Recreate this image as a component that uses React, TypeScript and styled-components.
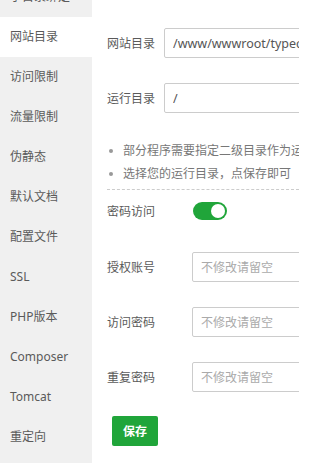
import React, { useState } from 'react';
import styled, { createGlobalStyle } from 'styled-components';

const Global = createGlobalStyle`
  html, body {
    margin: 0;
    padding: 0;
    background: #fff;
  }
  body {
    font-family: "Noto Sans", "Noto Sans CJK SC", sans-serif;
    font-size: 12px;
    color: #5a5a5a;
  }
`;

const Page = styled.div`
  display: flex;
  width: 299px;
  height: 463px;
  overflow: hidden;
`;

const Sidebar = styled.ul`
  width: 92px;
  flex-shrink: 0;
  margin: 0;
  padding: 0;
  list-style: none;
  background: #f0f0f0;
`;

const SideList = styled.div`
  margin-top: -23px;
`;

const SideItem = styled.li<{ active?: boolean }>`
  height: 40px;
  line-height: 40px;
  padding-left: 10px;
  font-size: 12px;
  color: #5a5a5a;
  background: ${({ active }) => (active ? '#fff' : 'transparent')};
  white-space: nowrap;
`;

const Main = styled.div`
  flex: 1;
  min-width: 0;
  overflow: hidden;
  padding: 28px 0 0 15px;
`;

const Row = styled.div<{ gap?: number }>`
  display: flex;
  align-items: center;
  height: 30px;
  margin-bottom: ${({ gap }) => gap ?? 25}px;
`;

const Label = styled.span<{ width: number }>`
  width: ${({ width }) => width}px;
  flex-shrink: 0;
  font-size: 12px;
  color: #5a5a5a;
  white-space: nowrap;
`;

const Input = styled.input`
  flex-shrink: 0;
  box-sizing: border-box;
  width: 260px;
  height: 30px;
  padding: 0 8px;
  border: 1px solid #ccc;
  border-radius: 2px;
  font-family: inherit;
  font-size: 12.5px;
  color: #555;
  outline: none;
  &::placeholder {
    color: #aaa;
    font-size: 12px;
  }
`;

const Tips = styled.ul`
  margin: 26px 0 0;
  padding: 0 0 4px;
  list-style: none;
  border-bottom: 1px dashed #ccc;
`;

const Tip = styled.li`
  position: relative;
  height: 23px;
  line-height: 23px;
  padding-left: 16px;
  color: #777;
  white-space: nowrap;
  &::before {
    content: '';
    position: absolute;
    left: 2px;
    top: 10px;
    width: 4px;
    height: 4px;
    border-radius: 50%;
    background: #999;
  }
`;

const SwitchRow = styled.div`
  display: flex;
  align-items: center;
  height: 30px;
  margin: 6px 0 26px;
`;

const Switch = styled.button<{ on: boolean }>`
  position: relative;
  width: 34px;
  height: 18px;
  padding: 0;
  border: none;
  border-radius: 9px;
  background: ${({ on }) => (on ? '#20a53a' : '#ccc')};
  cursor: pointer;
  &::after {
    content: '';
    position: absolute;
    top: 2px;
    left: ${({ on }) => (on ? '18px' : '2px')};
    width: 14px;
    height: 14px;
    border-radius: 50%;
    background: #fff;
  }
`;

const SaveButton = styled.button`
  margin-left: 5px;
  width: 46px;
  height: 30px;
  border: none;
  border-radius: 2px;
  background: #20a53a;
  color: #fff;
  font-family: inherit;
  font-size: 12px;
  font-weight: bold;
  cursor: pointer;
`;

const menu = [
  '子目录绑定',
  '网站目录',
  '访问限制',
  '流量限制',
  '伪静态',
  '默认文档',
  '配置文件',
  'SSL',
  'PHP版本',
  'Composer',
  'Tomcat',
  '重定向',
];

export default function App(): React.JSX.Element {
  const [locked, setLocked] = useState(true);

  return (
    <>
      <Global />
      <Page>
        <Sidebar>
          <SideList>
            {menu.map((m) => (
              <SideItem key={m} active={m === '网站目录'}>
                {m}
              </SideItem>
            ))}
          </SideList>
        </Sidebar>
        <Main>
          <Row>
            <Label width={57}>网站目录</Label>
            <Input defaultValue="/www/wwwroot/typecho" />
          </Row>
          <Row gap={0}>
            <Label width={57}>运行目录</Label>
            <Input defaultValue="/" />
          </Row>
          <Tips>
            <Tip>部分程序需要指定二级目录作为运行目录</Tip>
            <Tip>选择您的运行目录，点保存即可</Tip>
          </Tips>
          <SwitchRow>
            <Label width={86}>密码访问</Label>
            <Switch on={locked} onClick={() => setLocked(!locked)} />
          </SwitchRow>
          <Row>
            <Label width={85}>授权账号</Label>
            <Input placeholder="不修改请留空" />
          </Row>
          <Row>
            <Label width={85}>访问密码</Label>
            <Input type="password" placeholder="不修改请留空" />
          </Row>
          <Row gap={24}>
            <Label width={85}>重复密码</Label>
            <Input type="password" placeholder="不修改请留空" />
          </Row>
          <SaveButton>保存</SaveButton>
        </Main>
      </Page>
    </>
  );
}
